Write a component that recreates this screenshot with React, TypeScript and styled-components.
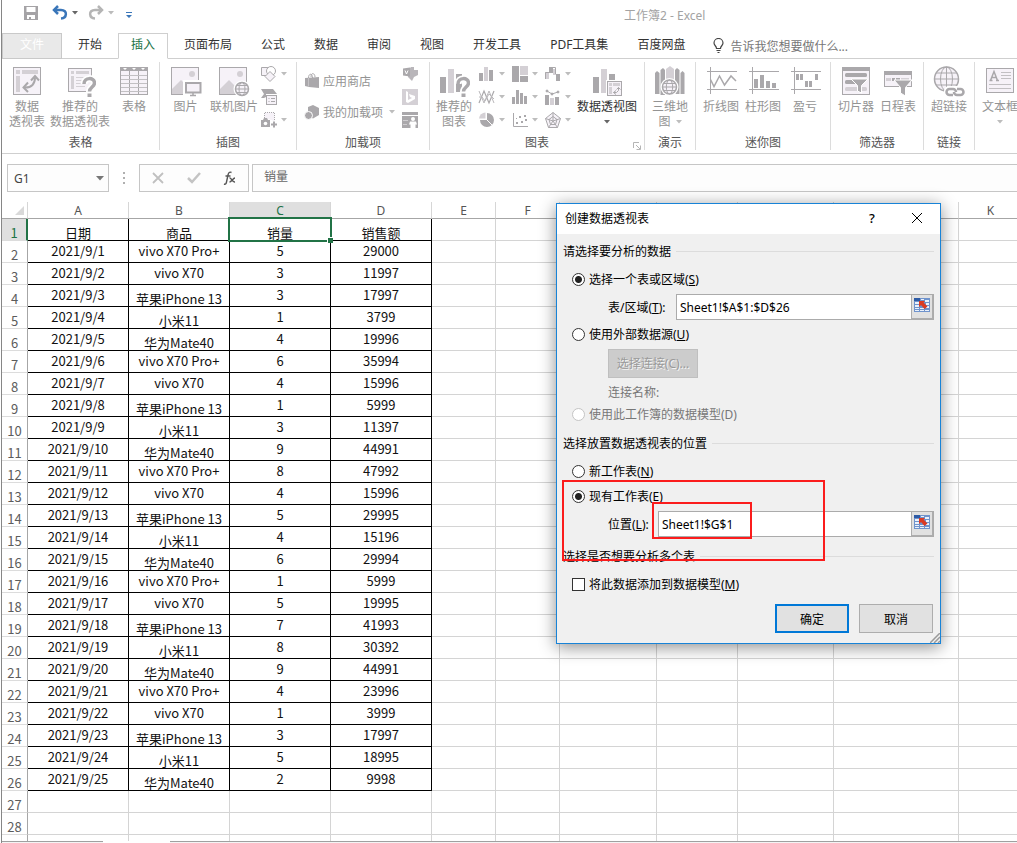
import React from "react";
import styled, { createGlobalStyle, css } from "styled-components";

const ui = `"Noto Sans", "Noto Sans CJK SC", sans-serif`;
const sheet = `"Noto Sans CJK SC", sans-serif`;
const green = "#217346";
const dark = "#aaa8ab";
const mid = "#d4d0d5";
const pale = "#f6f2f8";

const GlobalStyle = createGlobalStyle`
  * { box-sizing: border-box; }
  html, body { margin: 0; padding: 0; }
  body { background: #fff; font-family: ${ui}; font-size: 12px; color: #222; overflow: hidden; }
  button, input { font: inherit; color: inherit; margin: 0; }
  button { padding: 0; background: none; border: 0; }
  svg { display: block; flex: none; }
`;

const Window = styled.div`
  position: relative;
  display: flex;
  flex-direction: column;
  min-height: 100vh;
  margin-left: 1px;
  border-left: 1px solid #868686;
  background: #fff;
`;

/* ---------- title bar ---------- */
const TitleBar = styled.header`
  display: flex;
  align-items: center;
  height: 33px;
  padding: 0 0 8px 20px;
`;
const QuickAccess = styled.div`
  display: flex;
  align-items: center;
  gap: 10px;
  width: 602px;
`;
const QuickButton = styled.button`
  display: flex;
  align-items: center;
  gap: 4px;
`;
const DocTitle = styled.div`
  padding-top: 6px;
  color: #a3a3a3;
  line-height: 20px;
  white-space: nowrap;
`;

/* ---------- tabs ---------- */
const TabRow = styled.nav`
  display: flex;
  gap: 3px;
  height: 26px;
  border-bottom: 1px solid #cfcfcf;
`;
const Tab = styled.button<{ $kind?: "file" | "active" }>`
  height: 26px;
  padding: 0 12px 3px;
  border: 1px solid transparent;
  color: #333;
  line-height: 20px;
  white-space: nowrap;
  ${(p) =>
    p.$kind === "file" &&
    css`
      width: 60px;
      background: #e9e9e9;
      border-color: #c9c9c9;
      color: #fff;
    `}
  ${(p) =>
    p.$kind === "active" &&
    css`
      background: #fff;
      border-color: #cfcfcf #cfcfcf #fff;
      color: ${green};
    `}
`;
const TellMe = styled.button`
  display: flex;
  align-items: center;
  gap: 6px;
  margin-left: 12px;
  color: #777;
  white-space: nowrap;
`;

/* ---------- ribbon ---------- */
const Ribbon = styled.section`
  display: flex;
  height: 95px;
  padding: 3px 0;
  border-bottom: 1px solid #cfcfcf;
  overflow: hidden;
`;
const Group = styled.div<{ $w: number }>`
  position: relative;
  display: flex;
  flex: none;
  flex-direction: column;
  width: ${(p) => p.$w}px;
  border-right: 1px solid #dcdcdc;
`;
const GroupBody = styled.div<{ $pad?: number }>`
  display: flex;
  flex: 1;
  padding-left: ${(p) => p.$pad ?? 0}px;
`;
const GroupLabel = styled.div`
  color: #555;
  line-height: 15px;
  text-align: center;
`;
const BigButton = styled.button<{ $w: number; $on?: boolean }>`
  display: flex;
  flex: none;
  flex-direction: column;
  align-items: center;
  width: ${(p) => p.$w}px;
  padding-top: 3px;
  color: ${(p) => (p.$on ? "#333" : "#949494")};
  line-height: 15px;
  white-space: nowrap;
`;
const BigText = styled.span`
  display: flex;
  flex-direction: column;
  align-items: center;
  padding-top: 2px;
`;
const ArrowLine = styled.span`
  display: flex;
  align-items: center;
  gap: 5px;
  min-height: 15px;
`;
const SmallGrid = styled.div<{ $cols: number }>`
  display: grid;
  grid-template-columns: repeat(${(p) => p.$cols}, 33px);
  grid-auto-rows: 23px;
`;
const SmallButton = styled.button`
  display: flex;
  align-items: center;
  gap: 3px;
`;
const AddInList = styled.div`
  display: flex;
  flex-direction: column;
  width: 100px;
  padding: 3px 0 0;
  margin-right: 6px;
`;
const AddInButton = styled.button`
  display: flex;
  align-items: center;
  gap: 3px;
  height: 31px;
  color: #949494;
  white-space: nowrap;
`;
const Spacer = styled.span`
  flex: 1;
`;
const Launcher = styled.button`
  position: absolute;
  right: 3px;
  bottom: 0;
`;

/* ---------- formula bar ---------- */
const FormulaBar = styled.div`
  display: flex;
  height: 48px;
  padding: 10px 0 10px 5px;
`;
const NameBox = styled.div`
  display: flex;
  align-items: center;
  width: 102px;
  padding: 0 4px 0 6px;
  border: 1px solid #c6c6c6;
  background: #fdfdfd;
`;
const NameInput = styled.input`
  flex: 1;
  min-width: 0;
  padding: 1px 0 0;
  border: 0;
  background: none;
  color: #444;
  line-height: 20px;
`;
const Grip = styled.div`
  display: flex;
  align-items: center;
  justify-content: center;
  width: 30px;
`;
const FormulaTools = styled.div`
  display: flex;
  align-items: center;
  justify-content: space-between;
  width: 110px;
  padding: 0 12px;
  border: 1px solid #c6c6c6;
  background: #fdfdfd;
`;
const FormulaInput = styled.input`
  flex: 1;
  min-width: 0;
  margin-left: 3px;
  padding: 0 11px 4px;
  border: 1px solid #c6c6c6;
  border-right: 0;
  background: #fdfdfd;
  color: #666;
`;

/* ---------- sheet ---------- */
const SheetArea = styled.main`
  flex: 1;
  overflow: hidden;
`;
const Grid = styled.table`
  width: 100%;
  min-width: 1021px;
  table-layout: fixed;
  border-collapse: separate;
  border-spacing: 0;
  font-family: ${sheet};
  font-size: 13px;
  line-height: 14px;
`;
const Col = styled.col<{ $w?: number }>`
  width: ${(p) => (p.$w ? `${p.$w}px` : "auto")};
`;
const ColHead = styled.th<{ $on?: boolean }>`
  height: 17px;
  padding: 2px 0 0;
  border-right: 1px solid #d6d6d6;
  border-bottom: 1px solid #a6a6a6;
  background: ${(p) => (p.$on ? "#dfdfdf" : "#fff")};
  color: ${(p) => (p.$on ? green : "#555")};
  font-family: ${ui};
  font-size: 12px;
  font-weight: 400;
`;
const Corner = styled(ColHead)`
  padding: 0 3px 3px 0;
  vertical-align: bottom;
  svg {
    margin-left: auto;
  }
`;
const RowHead = styled.th<{ $on?: boolean }>`
  height: 22px;
  padding: 0;
  border-right: ${(p) => (p.$on ? `2px solid ${green}` : "1px solid #a6a6a6")};
  border-bottom: 1px solid #dcdcdc;
  background: ${(p) => (p.$on ? "#dfdfdf" : "#fff")};
  color: ${(p) => (p.$on ? green : "#5c5c5c")};
  font-weight: 400;
  vertical-align: bottom;
`;
const Cell = styled.td<{ $data?: boolean; $low?: boolean }>`
  position: relative;
  height: 22px;
  padding: 0 0 ${(p) => (p.$low ? 0 : 4)}px;
  border-right: 1px solid ${(p) => (p.$data ? "#000" : "#d4d4d4")};
  border-bottom: 1px solid ${(p) => (p.$data ? "#000" : "#d4d4d4")};
  color: #111;
  text-align: center;
  vertical-align: bottom;
  white-space: nowrap;
`;
const StubCell = styled.td<{ $head?: boolean }>`
  height: 6px;
  padding: 0;
  border-right: 1px solid ${(p) => (p.$head ? "#a6a6a6" : "#d4d4d4")};
`;
const Selection = styled.span`
  position: absolute;
  inset: -2px;
  z-index: 1;
  border: 2px solid ${green};
  &::after {
    content: "";
    position: absolute;
    right: -3px;
    bottom: -3px;
    width: 5px;
    height: 5px;
    background: ${green};
    box-shadow: -1px -1px 0 #fff;
  }
`;
const SheetTabs = styled.footer`
  display: flex;
  height: 2px;
`;
const TabEdge = styled.div<{ $w?: number; $open?: boolean }>`
  flex: ${(p) => (p.$w ? "none" : 1)};
  width: ${(p) => (p.$w ? `${p.$w}px` : "auto")};
  border-top: 1px solid ${(p) => (p.$open ? "#fff" : "#a0a0a0")};
  background: ${(p) => (p.$open ? "#fff" : "#f4f4f4")};
`;

/* ---------- dialog ---------- */
const Dialog = styled.form`
  position: absolute;
  top: 203px;
  left: 554px;
  z-index: 5;
  width: 385px;
  border: 1px solid #1883d7;
  background: #f0f0f0;
  color: #000;
  box-shadow: 0 3px 16px rgba(0, 0, 0, 0.45);
`;
const DialogTitle = styled.div`
  display: flex;
  align-items: center;
  height: 30px;
  padding: 0 17px 2px 8px;
  background: #fff;
`;
const TitleText = styled.h1`
  flex: 1;
  margin: 0;
  font-size: 12px;
  font-weight: 400;
`;
const TitleButton = styled.button`
  width: 12px;
  margin-left: 33px;
  font-size: 13px;
  font-weight: 500;
`;
const DialogBody = styled.div`
  padding: 7px 6px 10px;
`;
const Section = styled.h2<{ $first?: boolean }>`
  display: flex;
  align-items: center;
  gap: 5px;
  height: 20px;
  margin: ${(p) => (p.$first ? 0 : 9)}px 0 8px;
  font-size: 12px;
  font-weight: 400;
  line-height: 20px;
  white-space: nowrap;
  span {
    padding-top: 2px;
  }
  &::after {
    content: "";
    flex: 1;
    border-top: 1px solid #dcdcdc;
  }
`;
const Choice = styled.label<{ $off?: boolean }>`
  display: flex;
  align-items: center;
  gap: 4px;
  height: 20px;
  margin-bottom: 5px;
  padding-left: 9px;
  color: ${(p) => (p.$off ? "#777" : "#000")};
  line-height: 20px;
  span {
    padding-top: 2px;
  }
`;
const Radio = styled.input`
  appearance: none;
  width: 13px;
  height: 13px;
  border: 1px solid #333;
  border-radius: 50%;
  background: #fff;
  &:checked {
    background: radial-gradient(circle, #222 0 3px, #fff 4px);
  }
  &:disabled {
    border-color: #c4c4c4;
  }
`;
const Check = styled.input`
  appearance: none;
  width: 13px;
  height: 13px;
  border: 1px solid #333;
  background: #fff;
`;
const Field = styled.div`
  display: flex;
  align-items: center;
  height: 26px;
  margin-bottom: 4px;
  padding-left: 45px;
`;
const FieldLabel = styled.label<{ $w: number }>`
  width: ${(p) => p.$w}px;
  white-space: nowrap;
`;
const FieldBox = styled.div`
  display: flex;
  flex: 1;
  height: 26px;
  border: 1px solid #ababab;
  background: #fff;
`;
const FieldInput = styled.input`
  flex: 1;
  min-width: 0;
  padding: 0 3px;
  border: 0;
  background: none;
  outline: none;
`;
const RefButton = styled.button`
  display: flex;
  align-items: flex-start;
  justify-content: center;
  width: 22px;
  padding-top: 3px;
  border: 1px solid #adadad;
  border-width: 0 1px 1px;
  background: #e1e1e1;
`;
const Indent = styled.div`
  display: flex;
  flex-direction: column;
  align-items: flex-start;
  gap: 5px;
  margin-bottom: 1px;
  padding-left: 45px;
  color: #777;
  line-height: 20px;
`;
const PickButton = styled.button`
  width: 90px;
  height: 29px;
  border: 1px solid #bfbfbf;
  background: #ccc;
  color: #9a9a9a;
  text-shadow: 1px 1px 0 #f4f4f4;
`;
const Actions = styled.div`
  display: flex;
  justify-content: flex-end;
  gap: 10px;
  margin-top: 10px;
  padding-right: 1px;
`;
const ActionButton = styled.button<{ $primary?: boolean }>`
  width: 74px;
  height: 29px;
  border: ${(p) => (p.$primary ? "2px solid #0078d7" : "1px solid #adadad")};
  background: #e1e1e1;
`;
const Marker = styled.div<{ $x: number; $y: number; $w: number; $h: number }>`
  position: absolute;
  left: ${(p) => p.$x}px;
  top: ${(p) => p.$y}px;
  width: ${(p) => p.$w}px;
  height: ${(p) => p.$h}px;
  border: 2px solid #fb1c1c;
  pointer-events: none;
`;
const ResizeGrip = styled.svg`
  position: absolute;
  right: 0;
  bottom: 0;
`;

/* ---------- icons ---------- */
const Arrow = ({ c = "#bdbdbd" }: { c?: string }) => (
  <svg width="6" height="4" viewBox="0 0 6 4"><path d="M0 0h6L3 3.4z" fill={c} /></svg>
);
const Big = ({ children }: { children: React.ReactNode }) => (
  <svg width="32" height="32" viewBox="0 0 32 32" fill="none" stroke={dark}>{children}</svg>
);
const Small = ({ children }: { children: React.ReactNode }) => (
  <svg width="18" height="18" viewBox="0 0 18 18" fill="none" stroke={dark}>{children}</svg>
);
const Question = () => (
  <>
    <path d="M20 19c0-7 10.500-7 10.500-1 0 4-5 4-5 9" stroke="#fff" strokeWidth="7" />
    <path d="M20 19c0-7 10.500-7 10.500-1 0 4-5 4-5 8.500" strokeWidth="3.500" />
    <path d="M23.500 28.500h4v3.500h-4z" fill={dark} stroke="none" />
  </>
);
const PivotIcon = () => (
  <Big>
    <rect x="2.500" y="2.500" width="27" height="27" fill={pale} />
    <path d="M5 5h4v4H5zM11 5h16v4H11zM5 11h4v16H5z" fill={mid} stroke="none" />
    <path d="M13 22.500c8 .5 11-4 11-10" strokeWidth="2" />
    <path d="M20 15.500l4-4.500 4 4.500M17 17.500l-4.500 5 4.500 4.500" strokeWidth="2" />
  </Big>
);
const SuggestPivotIcon = () => (
  <Big>
    <rect x="4.500" y="3.500" width="23" height="23" fill={pale} />
    <path d="M7 6h3v3H7zM12 6h13v3H12zM7 11h3v13H7z" fill={mid} stroke="none" />
    <path d="M12 12.500h13M12 15.500h7M12 18.500h7M12 21.500h9" stroke={mid} />
    <Question />
  </Big>
);
const TableIcon = () => (
  <Big>
    <rect x="2.500" y="2.500" width="27" height="27" fill={pale} />
    <path d="M2 2h28v4H2z" fill={dark} stroke="none" />
    <path d="M5 3h4L7 5zM14 3h4l-2 2zM23 3h4l-2 2z" fill="#fff" stroke="none" />
    <path d="M11.500 6v24M20.500 6v24" />
    <path d="M3 10.500h26M3 14.500h26M3 18.500h26M3 22.500h26M3 26.500h26" stroke="#c2c0c3" />
  </Big>
);
const Picture = () => (
  <>
    <rect x="1.500" y="2.500" width="27" height="27" fill={pale} />
    <circle cx="22" cy="9" r="3" fill={mid} stroke="none" />
    <path d="M2 24l9-9 7 7v7H2z" fill={mid} stroke="none" />
  </>
);
const PictureIcon = () => (
  <Big>
    <Picture />
    <path d="M13 15h19v17H13z" fill="#fff" stroke="none" />
    <rect x="16" y="18" width="14.500" height="9.500" fill={pale} strokeWidth="2" />
    <path d="M23 28v2M20 30.500h6" strokeWidth="1.500" />
  </Big>
);
const OnlinePictureIcon = () => (
  <Big>
    <Picture />
    <circle cx="24" cy="24" r="8.500" fill="#fff" stroke="none" />
    <circle cx="24" cy="24" r="6.500" fill={pale} strokeWidth="1.500" />
    <ellipse cx="24" cy="24" rx="3" ry="6.500" />
    <path d="M17.500 24h13M18.500 20.500h11M18.500 27.500h11" />
  </Big>
);
const ShapesIcon = () => (
  <Small>
    <path d="M11 2.500H1.500v8H6" fill={pale} />
    <circle cx="11" cy="6" r="4.500" fill="#fff" />
    <path d="M10 6.500l5 5-5 5-5-5z" fill={pale} />
  </Small>
);
const SmartArtIcon = () => (
  <Small>
    <path d="M1 1h12l4 5H6v3l-2 1H1l3-4z" fill={dark} stroke="none" />
    <rect x="6.500" y="7.500" width="10" height="9" fill={pale} />
    <path d="M8.500 10.500h1M11 10.500h4M8.500 13.500h1M11 13.500h4" />
  </Small>
);
const ScreenshotIcon = () => (
  <Small>
    <path d="M4.500 7V1.500h10V10" strokeDasharray="1 1" fill={pale} />
    <path d="M1 9h2l1-2h3l1 2h2v7H1z" fill={dark} stroke="none" />
    <circle cx="5.500" cy="12.500" r="1.800" fill="#fff" stroke="none" />
    <path d="M11 13.500h6M14 10.500v6" strokeWidth="2" />
  </Small>
);
const StoreIcon = () => (
  <svg width="16" height="18" viewBox="0 0 16 18" fill="none" stroke={dark}>
    <path d="M4.500 6c0-5 4-5 4 0M7 5c0-5 4-4 4 0" />
    <path d="M1 6l14-1v11L5 15l-4-1z" fill={dark} stroke="none" />
    <path d="M4.500 6v8.500" stroke="#c4c2c5" />
  </svg>
);
const MyAddInsIcon = () => (
  <svg width="16" height="18" viewBox="0 0 16 18" fill={dark}>
    <path d="M9 2l6 3v7l-6 3.500L4 13V4z" />
    <circle cx="4.500" cy="12.500" r="4" stroke="#fff" />
  </svg>
);
const VisioIcon = () => (
  <Small>
    <path d="M10 2h3v3h4v5l-4 2-2 4-4-4V5z" fill="#b9b6ba" stroke="none" />
    <path d="M2 3.500l7-1v9l-7-1z" fill={dark} stroke="none" />
    <path d="M4 5.500l1.500 3.500L7 5.500" stroke="#fff" />
  </Small>
);
const BingIcon = () => (
  <Small>
    <path d="M1 1h16v16H1z" fill={mid} stroke="none" />
    <path d="M5 3l2 1v8l4-2-2-1-1-3 6 2v3l-7 4-2-1z" fill="#fff" stroke="none" />
  </Small>
);
const PeopleGraphIcon = () => (
  <Small>
    <path d="M1 1h16v16H1z" fill={dark} stroke="none" />
    <path d="M1 4.500h16" stroke="#fff" />
    <path d="M2 9.500h5M2 13.500h4" stroke="#cfcdd0" />
    <circle cx="12" cy="8" r="2" fill="#fff" stroke="none" />
    <path d="M9 10.500h6l1 3h-1.500v3.500h-5v-3.500H8z" fill="#fff" stroke="none" />
  </Small>
);
const Bars = () => (
  <path d="M2 12h6v16H2z" fill={dark} stroke="none" />
);
const SuggestChartIcon = () => (
  <Big>
    <Bars />
    <path d="M10 4h6v24h-6z" fill={mid} stroke="none" />
    <path d="M18 9h6v18h-6z" fill={dark} stroke="none" />
    <Question />
  </Big>
);
const PivotChartIcon = () => (
  <Big>
    <Bars />
    <path d="M10 4h6v24h-6z" fill={mid} stroke="none" />
    <path d="M18 9h6v7h-6z" fill={dark} stroke="none" />
    <path d="M15 15h17v17H15z" fill="#fff" stroke="none" />
    <rect x="16.500" y="16.500" width="14" height="14" fill={pale} />
    <path d="M18 18h3v3h-3zM22 18h7v3h-7zM18 22h3v7h-3z" fill={mid} stroke="none" />
    <path d="M22.500 27.500h3l2-2v-3M25 25.500l-2.500 2 2.500 2M25.500 24.500l2-2 2 2" />
  </Big>
);
const ColumnIcon = () => (
  <Small><path d="M1 8h4v8H1zM11 5h4v11h-4z" fill={dark} stroke="none" /><path d="M6 2h4v14H6z" fill={mid} stroke="none" /></Small>
);
const HierarchyIcon = () => (
  <Small><path d="M1 1h7v16H1z" fill={dark} stroke="none" /><path d="M9 1h8v9H9z" fill={mid} stroke="none" /><path d="M9 11h8v6H9z" fill={dark} stroke="none" /></Small>
);
const WaterfallIcon = () => (
  <Small><path d="M1 7h4v7H1zM9 4h3v6H9z" fill={mid} stroke="none" /><path d="M5 2h4v6H5zM12 9h4v7h-4z" fill={dark} stroke="none" /><path d="M1.500 14V7.500H5M9 2.500h2.500V9" /></Small>
);
const LineIcon = () => (
  <Small><path d="M1 15L6 3l5 12 5-12" strokeWidth="1.200" /><path d="M1 3l5 12 5-12 5 12M1 9h3l3 4 4-7 5 5" stroke="#bab8bb" /></Small>
);
const HistogramIcon = () => (
  <Small><path d="M1 9h3v7H1zM5 2h3v14H5zM9 5h3v11H9zM13 8h3v8h-3z" fill={dark} stroke="none" /></Small>
);
const ComboIcon = () => (
  <Small><path d="M1 7h4v10H1zM11 9h4v8h-4z" fill={dark} stroke="none" /><path d="M6 10h4v7H6z" fill={mid} stroke="none" /><path d="M3 3l5 3 6-2" /><circle cx="3" cy="3" r="1" fill={dark} /><circle cx="8" cy="6" r="1" fill={dark} /><circle cx="14" cy="4" r="1" fill={dark} /></Small>
);
const PieIcon = () => (
  <Small><path d="M9 9V2a7 7 0 1 1-7 7z" fill={dark} stroke="none" /><path d="M7.500 7.500V1.500a6.500 6.500 0 0 0-6.500 6z" fill={mid} stroke="none" /><path d="M9 9l5 5" stroke="#fff" /></Small>
);
const ScatterIcon = () => (
  <Small><path d="M2.500 2v13.500H17" /><path d="M5 11h2v2H5zM8 5h2v2H8zM10 10h2v2h-2zM13 4h2v2h-2zM14 8h2v2h-2zM5 7h1v1H5z" fill={dark} stroke="none" /></Small>
);
const RadarIcon = () => (
  <Small><path d="M9 1.500l7.500 6-3 9h-9l-3-9z" fill={pale} /><path d="M9 5.500l4 3-1.500 5h-5L5 8.500zM9 1.500V10M1.500 7.500L9 10l7.500-2.500M4.500 16.500L9 10l4.500 6.500" /></Small>
);
const MapIcon = () => (
  <Big>
    <path d="M1 8l2-2 2.500 2v21H1zM6.500 5L9 3l2 2v25H6.500zM21 5l2-2 2.500 2v24H21zM26.500 8l2-2 2 2v21h-4z" fill={dark} stroke="none" />
    <path d="M12 4l4-3 4 3v14h-8z" fill={mid} stroke="none" />
    <circle cx="15.500" cy="22" r="9" fill="#fff" stroke="none" />
    <circle cx="15.500" cy="22" r="7" fill={pale} strokeWidth="1.500" />
    <ellipse cx="15.500" cy="22" rx="3.200" ry="7" />
    <path d="M8.500 22h14M9.500 18.500h12M9.500 25.500h12" />
  </Big>
);
const SparkFrame = () => <path d="M5.500 2v27M2 6.500h30M2 24.500h30" />;
const SparkLineIcon = () => (
  <Big><SparkFrame /><path d="M5.500 14.500l3.500 7 5.500-10.500 5 9 6.500-9 5 5" strokeWidth="1.500" /></Big>
);
const SparkColumnIcon = () => (
  <Big><SparkFrame /><path d="M7 14h4v9H7zM13 10h4v13h-4zM19 16h4v7h-4zM25 18h4v5h-4z" fill={dark} stroke="none" /></Big>
);
const SparkWinIcon = () => (
  <Big><SparkFrame /><path d="M7 9h3v6H7zM11 9h3v6h-3zM16 16h3v6h-3zM20 16h3v6h-3zM26 9h3v6h-3z" fill={dark} stroke="none" /></Big>
);
const SlicerIcon = () => (
  <Big>
    <rect x="2.500" y="2.500" width="27" height="27" fill={pale} />
    <path d="M2 2h28v4H2z" fill={dark} stroke="none" />
    <rect x="5" y="8" width="22" height="4" rx="1.500" fill={dark} stroke="none" />
    <rect x="5" y="15" width="12" height="4" rx="1.500" fill={dark} stroke="none" />
    <rect x="5" y="22" width="22" height="4" rx="1.500" fill={mid} stroke="none" />
    <path d="M11 14h17l-6.500 6.500V28l-4-2v-5.500z" fill={dark} stroke="#fff" />
  </Big>
);
const TimelineIcon = () => (
  <Big>
    <rect x="2.500" y="6.500" width="27" height="15" fill={pale} />
    <path d="M2 6h28v4H2zM14 13h4v3h-4zM10 13h3v3h-3z" fill={dark} stroke="none" />
    <path d="M4 13h5v3H4zM19 13h8v3h-8z" fill={mid} stroke="none" />
    <path d="M12 15h18l-6.500 7.500V31l-5-3v-5.500z" fill={dark} stroke="#fff" />
  </Big>
);
const LinkIcon = () => (
  <Big>
    <circle cx="13.500" cy="14" r="12" fill={pale} strokeWidth="1.500" />
    <ellipse cx="13.500" cy="14" rx="6" ry="12" />
    <path d="M13.500 2v24M1.500 14h24M3 8h21M3 20h21" />
    <rect x="11" y="21" width="21" height="12" rx="5" fill="#fff" stroke="none" />
    <path d="M20 30h-3.500a3 3 0 0 1 0-6H20a3 3 0 0 1 3 3M24 24h3.500a3 3 0 0 1 0 6H24a3 3 0 0 1-3-3" strokeWidth="2.500" />
  </Big>
);
const TextBoxIcon = () => (
  <Big>
    <rect x="2.500" y="3.500" width="27" height="24" fill={pale} />
    <path d="M6.500 15.500l3.500-9 3.500 9M7.500 12.500h5M5.500 15.500h3M12 15.500h3" strokeWidth="1.500" />
    <path d="M17 7.500h10M17 10.500h10M17 13.500h10M5 19.500h22M5 23.500h22" stroke="#c2c0c3" />
  </Big>
);
const RefIcon = () => (
  <svg width="16" height="14" viewBox="0 0 16 14">
    <path d="M0 0h16v14H0z" fill="#6f93cc" />
    <path d="M0 0h6v3H0z" fill="#2d5ba6" />
    <path d="M1 4h4v2H1zM11 2h4v2h-4zM7 1h3v1H7zM1 7h4v2H1zM6 5h4v2H6zM12 5h3v2h-3zM1 10h4v1H1zM6 10h4v1H6zM12 8h3v2h-3zM1 12h4v1H1zM6 12h4v1H6zM11 12h4v1h-4z" fill="#eaf1fb" />
    <path d="M5 3h6L9.500 4.500l4 4-3 2.500-3.500-4L5 9z" fill="#dc3a22" />
  </svg>
);

/* ---------- data ---------- */
const tabs = ["页面布局", "公式", "数据", "审阅", "视图", "开发工具", "PDF工具集", "百度网盘"];
const products = ["vivo X70 Pro+", "vivo X70", "苹果iPhone 13", "小米11", "华为Mate40"];
const counts = [5, 3, 3, 1, 4, 6, 4, 1, 3, 9, 8, 4, 5, 4, 6, 1, 5, 7, 8, 9, 4, 1, 3, 5, 2];
const sales = [
  29000, 11997, 17997, 3799, 19996, 35994, 15996, 5999, 11397, 44991, 47992, 15996, 29995,
  15196, 29994, 5999, 19995, 41993, 30392, 44991, 23996, 3999, 17997, 18995, 9998,
];
const rows: (string | number)[][] = [
  ["日期", "商品", "销量", "销售额"],
  ...counts.map((n, i) => [`2021/9/${i + 1}`, products[i % 5], n, sales[i]]),
  [],
  [],
];
/* Columns behind the dialog carry no letter. */
const columns: { letter?: string; width?: number }[] = [
  { letter: "A", width: 101 },
  { letter: "B", width: 101 },
  { letter: "C", width: 101 },
  { letter: "D", width: 101 },
  { letter: "E", width: 64 },
  { letter: "F", width: 64 },
  { width: 97 },
  { width: 81 },
  { width: 96 },
  { width: 125 },
  { letter: "K" },
];
const hasHan = (v: unknown) => /[\u4e00-\u9fff]/.test(String(v));
const chartIcons = [
  ColumnIcon, HierarchyIcon, WaterfallIcon,
  LineIcon, HistogramIcon, ComboIcon,
  PieIcon, ScatterIcon, RadarIcon,
];

const Tool = ({ w, icon, lines, on, arrow }: {
  w: number; icon: React.ReactNode; lines: string[]; on?: boolean; arrow?: "below" | "inline";
}) => (
  <BigButton type="button" $w={w} $on={on}>
    {icon}
    <BigText>
      {lines.map((l, i) => (
        <ArrowLine key={l}>
          {l}
          {arrow === "inline" && i === lines.length - 1 && <Arrow />}
        </ArrowLine>
      ))}
      {arrow === "below" && <ArrowLine><Arrow c={on ? "#666" : undefined} /></ArrowLine>}
    </BigText>
  </BigButton>
);

export default function App() {
  return (
    <>
      <GlobalStyle />
      <Window>
        <TitleBar>
          <QuickAccess>
            <QuickButton type="button" aria-label="保存">
              <svg width="20" height="16" viewBox="0 0 20 16">
                <path d="M2 1h14v14H2z" fill="#a5a3a6" />
                <path d="M4.500 2h9v5h-9zM5 10h8v4H9v-2H7v2H5z" fill="#fff" />
              </svg>
            </QuickButton>
            <QuickButton type="button" aria-label="撤消">
              <svg width="16" height="16" viewBox="0 0 16 16" fill="none" stroke="#3a76b9" strokeWidth="2.500">
                <path d="M6 1L2 5l4 4" /><path d="M2 5h7c7 0 6 8 0 8.500" />
              </svg>
              <Arrow c="#666" />
            </QuickButton>
            <QuickButton type="button" aria-label="恢复">
              <svg width="16" height="16" viewBox="0 0 16 16" fill="none" stroke="#b5b5b5" strokeWidth="2.500">
                <path d="M10 1l4 4-4 4" /><path d="M14 5H7c-7 0-6 8 0 8.500" />
              </svg>
              <Arrow c="#bbb" />
            </QuickButton>
            <QuickButton type="button" aria-label="自定义快速访问工具栏">
              <svg width="10" height="12" viewBox="0 0 10 12"><path d="M2 5h6v1H2zM2 8h6L5 11z" fill="#3a76b9" /></svg>
            </QuickButton>
          </QuickAccess>
          <DocTitle>工作簿2 - Excel</DocTitle>
        </TitleBar>

        <TabRow>
          <Tab type="button" $kind="file">文件</Tab>
          <Tab type="button">开始</Tab>
          <Tab type="button" $kind="active">插入</Tab>
          {tabs.map((t) => <Tab type="button" key={t}>{t}</Tab>)}
          <TellMe type="button">
            <svg width="11" height="15" viewBox="0 0 11 15" fill="none" stroke="#444">
              <path d="M3.500 10.500C3.500 8 1 7.500 1 5a4.500 4.500 0 0 1 9 0c0 2.500-2.500 3-2.500 5.500zM3.500 12.500h4M4.500 14.500h2" strokeWidth="1.200" />
            </svg>
            告诉我您想要做什么...
          </TellMe>
        </TabRow>

        <Ribbon>
          <Group $w={158}>
            <GroupBody $pad={1}>
              <Tool w={48} icon={<PivotIcon />} lines={["数据", "透视表"]} />
              <Tool w={58} icon={<SuggestPivotIcon />} lines={["推荐的", "数据透视表"]} />
              <Tool w={50} icon={<TableIcon />} lines={["表格"]} />
            </GroupBody>
            <GroupLabel>表格</GroupLabel>
          </Group>
          <Group $w={137}>
            <GroupBody $pad={3}>
              <Tool w={45} icon={<PictureIcon />} lines={["图片"]} />
              <Tool w={52} icon={<OnlinePictureIcon />} lines={["联机图片"]} />
              <SmallGrid $cols={1}>
                <SmallButton type="button" aria-label="形状"><ShapesIcon /><Arrow /></SmallButton>
                <SmallButton type="button" aria-label="SmartArt"><SmartArtIcon /></SmallButton>
                <SmallButton type="button" aria-label="屏幕截图"><ScreenshotIcon /><Arrow /></SmallButton>
              </SmallGrid>
            </GroupBody>
            <GroupLabel>插图</GroupLabel>
          </Group>
          <Group $w={133}>
            <GroupBody $pad={7}>
              <AddInList>
                <AddInButton type="button"><StoreIcon />应用商店</AddInButton>
                <AddInButton type="button"><MyAddInsIcon />我的加载项<Spacer /><Arrow /></AddInButton>
              </AddInList>
              <SmallGrid $cols={1}>
                <SmallButton type="button" aria-label="Visio"><VisioIcon /></SmallButton>
                <SmallButton type="button" aria-label="必应地图"><BingIcon /></SmallButton>
                <SmallButton type="button" aria-label="人物图"><PeopleGraphIcon /></SmallButton>
              </SmallGrid>
            </GroupBody>
            <GroupLabel>加载项</GroupLabel>
          </Group>
          <Group $w={215}>
            <GroupBody>
              <Tool w={48} icon={<SuggestChartIcon />} lines={["推荐的", "图表"]} />
              <SmallGrid $cols={3}>
                {chartIcons.map((I, i) => (
                  <SmallButton type="button" key={i} aria-label={`图表类型 ${i + 1}`}><I /><Arrow /></SmallButton>
                ))}
              </SmallGrid>
              <Tool w={60} icon={<PivotChartIcon />} lines={["数据透视图"]} on arrow="below" />
            </GroupBody>
            <GroupLabel>图表</GroupLabel>
            <Launcher type="button" aria-label="图表选项">
              <svg width="8" height="8" viewBox="0 0 8 8" fill="none" stroke="#b5b5b5"><path d="M.5 6V.5H6M3 3l4 4M7.500 3.500v4h-4" /></svg>
            </Launcher>
          </Group>
          <Group $w={51}>
            <GroupBody>
              <Tool w={50} icon={<MapIcon />} lines={["三维地", "图"]} arrow="inline" />
            </GroupBody>
            <GroupLabel>演示</GroupLabel>
          </Group>
          <Group $w={135}>
            <GroupBody $pad={4}>
              <Tool w={42} icon={<SparkLineIcon />} lines={["折线图"]} />
              <Tool w={42} icon={<SparkColumnIcon />} lines={["柱形图"]} />
              <Tool w={42} icon={<SparkWinIcon />} lines={["盈亏"]} />
            </GroupBody>
            <GroupLabel>迷你图</GroupLabel>
          </Group>
          <Group $w={93}>
            <GroupBody $pad={4}>
              <Tool w={42} icon={<SlicerIcon />} lines={["切片器"]} />
              <Tool w={42} icon={<TimelineIcon />} lines={["日程表"]} />
            </GroupBody>
            <GroupLabel>筛选器</GroupLabel>
          </Group>
          <Group $w={51}>
            <GroupBody>
              <Tool w={50} icon={<LinkIcon />} lines={["超链接"]} />
            </GroupBody>
            <GroupLabel>链接</GroupLabel>
          </Group>
          <Group $w={51}>
            <GroupBody>
              <Tool w={50} icon={<TextBoxIcon />} lines={["文本框"]} arrow="below" />
            </GroupBody>
          </Group>
        </Ribbon>

        <FormulaBar>
          <NameBox>
            <NameInput aria-label="名称框" defaultValue="G1" />
            <svg width="8" height="5" viewBox="0 0 8 5"><path d="M0 0h8L4 4.500z" fill="#777" /></svg>
          </NameBox>
          <Grip>
            <svg width="2" height="12" viewBox="0 0 2 12"><path d="M0 0h2v2H0zM0 5h2v2H0zM0 10h2v2H0z" fill="#b0b0b0" /></svg>
          </Grip>
          <FormulaTools>
            <button type="button" aria-label="取消输入">
              <svg width="12" height="12" viewBox="0 0 12 12" stroke="#c0c0c0" strokeWidth="1.800"><path d="M1 1l10 10M11 1L1 11" /></svg>
            </button>
            <button type="button" aria-label="输入">
              <svg width="14" height="12" viewBox="0 0 14 12" fill="none" stroke="#c4c4c4" strokeWidth="2.500"><path d="M1 6l4 4 8-9" /></svg>
            </button>
            <button type="button" aria-label="插入函数">
              <svg width="13" height="14" viewBox="0 0 13 14" fill="none" stroke="#555" strokeWidth="1.400">
                <path d="M8.500 1.500c-2-1-3 0-3.500 2.500L3.500 11c-.4 2-1.200 2.500-2.500 2M2.500 5h5M6.500 7c2-.5 2.500 4.500 5.500 4M12 7c-2 0-3.500 4-5.500 4" />
              </svg>
            </button>
          </FormulaTools>
          <FormulaInput aria-label="编辑栏" defaultValue="销量" />
        </FormulaBar>

        <SheetArea>
          <Grid>
            <colgroup>
              <Col $w={26} />
              {columns.map((c, i) => <Col key={i} $w={c.width} />)}
            </colgroup>
            <thead>
              <tr>
                <Corner aria-label="全选">
                  <svg width="9" height="9" viewBox="0 0 9 9"><path d="M9 0v9H0z" fill="#d9d9d9" /></svg>
                </Corner>
                {columns.map((c, i) => (
                  <ColHead key={i} scope="col" $on={c.letter === "C"}>{c.letter}</ColHead>
                ))}
              </tr>
            </thead>
            <tbody>
              {rows.map((r, y) => (
                <tr key={y}>
                  <RowHead scope="row" $on={y === 0}>{y + 1}</RowHead>
                  {columns.map((c, x) => (
                    <Cell key={x} $data={x < r.length} $low={hasHan(r[x])}>
                      {r[x]}
                      {y === 0 && c.letter === "C" && <Selection />}
                    </Cell>
                  ))}
                </tr>
              ))}
              <tr>
                <StubCell $head />
                {columns.map((_, i) => <StubCell key={i} />)}
              </tr>
            </tbody>
          </Grid>
        </SheetArea>
        <SheetTabs>
          <TabEdge $w={101} />
          <TabEdge $w={67} $open />
          <TabEdge />
        </SheetTabs>

        <Dialog onSubmit={(e) => e.preventDefault()} aria-label="创建数据透视表">
          <DialogTitle>
            <TitleText>创建数据透视表</TitleText>
            <TitleButton type="button">?</TitleButton>
            <TitleButton type="button" aria-label="关闭">
              <svg width="12" height="12" viewBox="0 0 12 12" stroke="#000"><path d="M1 1l10 10M11 1L1 11" /></svg>
            </TitleButton>
          </DialogTitle>
          <DialogBody>
            <Section $first><span>请选择要分析的数据</span></Section>
            <Choice><Radio type="radio" name="source" defaultChecked /><span>选择一个表或区域(<u>S</u>)</span></Choice>
            <Field>
              <FieldLabel $w={68} htmlFor="range">表/区域(<u>T</u>):</FieldLabel>
              <FieldBox>
                <FieldInput id="range" defaultValue="Sheet1!$A$1:$D$26" />
                <RefButton type="button" aria-label="选择区域"><RefIcon /></RefButton>
              </FieldBox>
            </Field>
            <Choice><Radio type="radio" name="source" /><span>使用外部数据源(<u>U</u>)</span></Choice>
            <Indent>
              <PickButton type="button" disabled>选择连接(C)...</PickButton>
              <span>连接名称:</span>
            </Indent>
            <Choice $off><Radio type="radio" name="source" disabled /><span>使用此工作簿的数据模型(D)</span></Choice>
            <Section><span>选择放置数据透视表的位置</span></Section>
            <Choice><Radio type="radio" name="target" /><span>新工作表(<u>N</u>)</span></Choice>
            <Choice><Radio type="radio" name="target" defaultChecked /><span>现有工作表(<u>E</u>)</span></Choice>
            <Field>
              <FieldLabel $w={50} htmlFor="place">位置(<u>L</u>):</FieldLabel>
              <FieldBox>
                <FieldInput id="place" defaultValue="Sheet1!$G$1" />
                <RefButton type="button" aria-label="选择位置"><RefIcon /></RefButton>
              </FieldBox>
            </Field>
            <Section><span>选择是否想要分析多个表</span></Section>
            <Choice><Check type="checkbox" /><span>将此数据添加到数据模型(<u>M</u>)</span></Choice>
            <Actions>
              <ActionButton type="submit" $primary>确定</ActionButton>
              <ActionButton type="button">取消</ActionButton>
            </Actions>
          </DialogBody>
          <Marker $x={5} $y={276} $w={263} $h={81} />
          <Marker $x={95} $y={298} $w={100} $h={37} />
          <ResizeGrip width="10" height="10" viewBox="0 0 10 10" stroke="#9a9a9a" strokeWidth="1.500">
            <path d="M0 10L10 0M4 10l6-6M8 10l2-2" />
          </ResizeGrip>
        </Dialog>
      </Window>
    </>
  );
}
